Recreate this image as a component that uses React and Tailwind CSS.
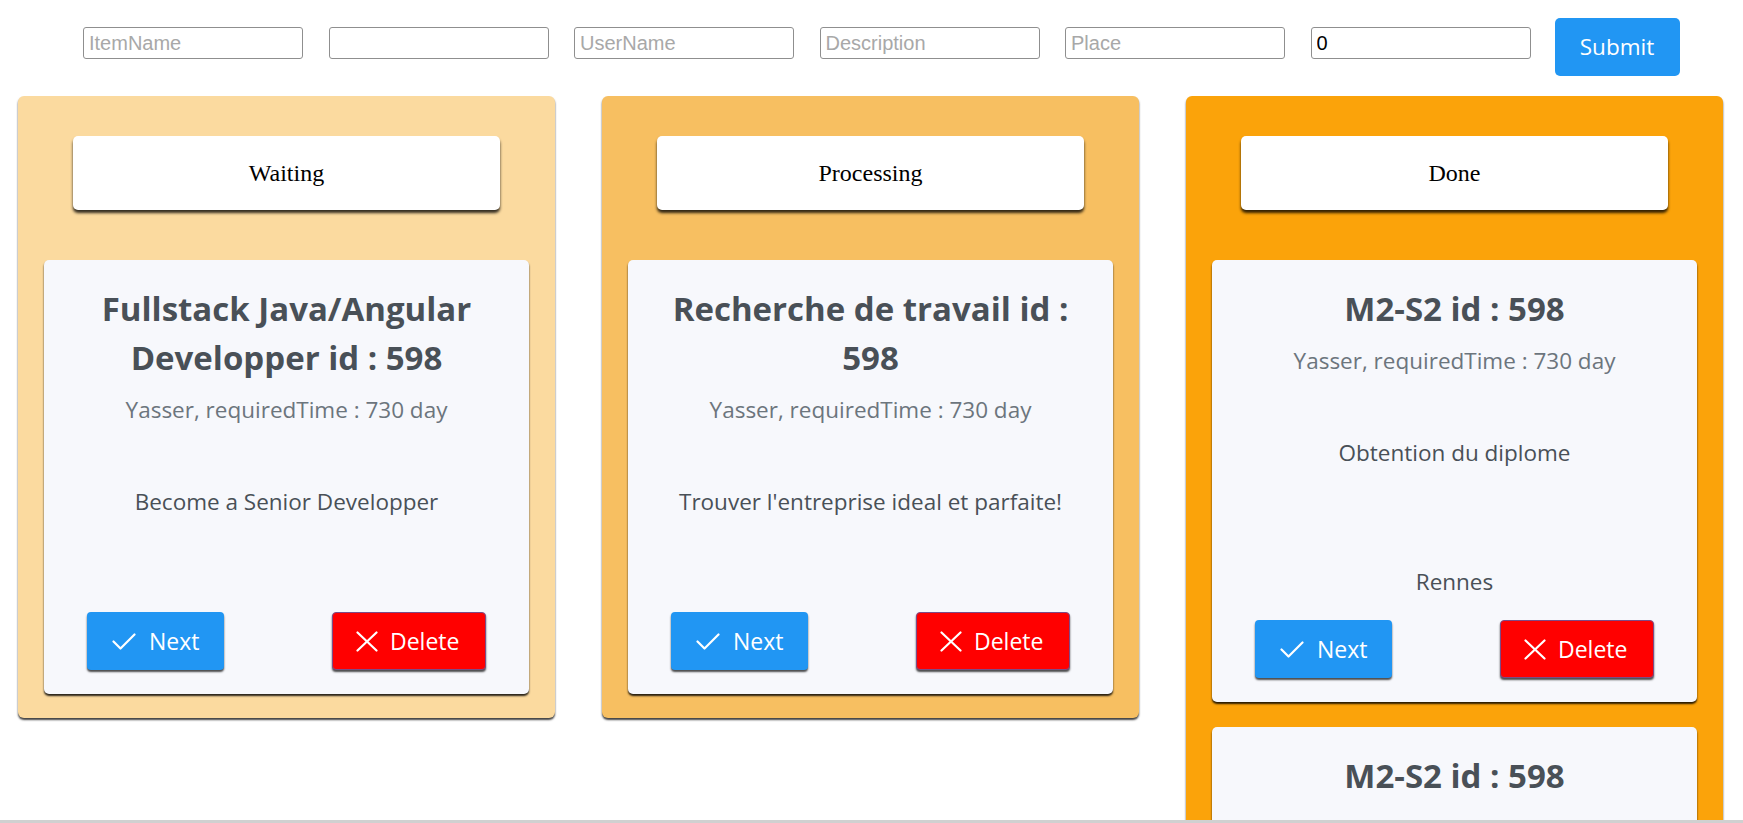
import React, { useState } from 'react';

const columns = [
	{
		name: 'Waiting',
		bg: 'bg-[#fbda9f]',
		items: [
			{ id: 598, title: 'Fullstack Java/Angular Developper', user: 'Yasser', time: 730, description: 'Become a Senior Developper', place: '' }
		]
	},
	{
		name: 'Processing',
		bg: 'bg-[#f7bf61]',
		items: [
			{ id: 598, title: 'Recherche de travail', user: 'Yasser', time: 730, description: "Trouver l'entreprise ideal et parfaite!", place: '' }
		]
	},
	{
		name: 'Done',
		bg: 'bg-[#fba30a]',
		items: [
			{ id: 598, title: 'M2-S2', user: 'Yasser', time: 730, description: 'Obtention du diplome', place: 'Rennes' },
			{ id: 598, title: 'M2-S2', user: 'Yasser', time: 730, description: 'Obtention du diplome', place: 'Rennes' }
		]
	}
];

const CheckIcon = () => (
	<svg width="24" height="17" viewBox="0 0 24 17" fill="none" stroke="currentColor" strokeWidth="2.2" strokeLinecap="round" strokeLinejoin="round">
		<polyline points="1.5,8.5 8.5,15.5 22.5,1.5" />
	</svg>
);

const CloseIcon = () => (
	<svg width="22" height="21" viewBox="0 0 22 21" fill="none" stroke="currentColor" strokeWidth="2.2" strokeLinecap="round">
		<line x1="1.5" y1="1.5" x2="20.5" y2="19.5" />
		<line x1="20.5" y1="1.5" x2="1.5" y2="19.5" />
	</svg>
);

const ItemCard = ({ item }) => (
	<div className="bg-[#f7f8fc] rounded-[5px] shadow-[0_2px_2px_rgba(0,0,0,0.85)] py-6 text-center">
		<h3 className="px-[30px] text-[33px] leading-[49px] font-bold text-[#495057]">
			{`${item.title} id : ${item.id}`}
		</h3>
		<p className="mt-[13px] text-[22.5px] leading-[30px] text-[#6c757d]">
			{`${item.user}, requiredTime : ${item.time} day`}
		</p>
		<p className="mt-[62px] text-[22.5px] leading-[30px] text-[#495057]">{item.description}</p>
		{item.place && (
			<p className="mt-[99px] text-[22.5px] leading-[30px] text-[#495057]">{item.place}</p>
		)}
		<div className={'flex justify-between px-[43px] ' + (item.place ? 'mt-[23px]' : 'mt-[95px]')}>
			<button className="h-[58px] w-[137px] flex items-center gap-[13px] pl-[25px] bg-[#2196f3] text-white text-[23px] rounded-[4px] shadow-[0_2px_2px_rgba(0,0,0,0.7)]">
				<CheckIcon />
				<span>Next</span>
			</button>
			<button className="h-[58px] w-[154px] flex items-center gap-[12px] pl-[23px] bg-[#ff0000] text-white text-[23px] rounded-[4px] border border-[#7d4a86] shadow-[0_2px_2px_rgba(0,0,0,0.7)]">
				<CloseIcon />
				<span>Delete</span>
			</button>
		</div>
	</div>
);

const App = () => {
	const [count, setCount] = useState('0');

	return (
		<div className="h-screen overflow-hidden bg-white font-['Open_Sans',sans-serif]">
			{/* Form */}
			<div className="flex items-start pt-[18px] pl-[83px] font-['Liberation_Sans',Arial,sans-serif]">
				<div className="flex gap-[25.5px] mt-[9px]">
					<input placeholder="ItemName" className="w-[220px] h-[32px] px-[5px] text-[20px] border border-[#8f8f8f] rounded-[3px] placeholder:text-[#a8a8a8] outline-none" />
					<input className="w-[220px] h-[32px] px-[5px] text-[20px] border border-[#8f8f8f] rounded-[3px] outline-none" />
					<input placeholder="UserName" className="w-[220px] h-[32px] px-[5px] text-[20px] border border-[#8f8f8f] rounded-[3px] placeholder:text-[#a8a8a8] outline-none" />
					<input placeholder="Description" className="w-[220px] h-[32px] px-[5px] text-[20px] border border-[#8f8f8f] rounded-[3px] placeholder:text-[#a8a8a8] outline-none" />
					<input placeholder="Place" className="w-[220px] h-[32px] px-[5px] text-[20px] border border-[#8f8f8f] rounded-[3px] placeholder:text-[#a8a8a8] outline-none" />
					<input value={count} onChange={(e) => setCount(e.target.value)} className="w-[220px] h-[32px] px-[5px] text-[20px] text-black border border-[#8f8f8f] rounded-[3px] outline-none" />
				</div>
				<button className="ml-[24px] w-[125px] h-[58px] bg-[#2196f3] text-white text-[22.5px] rounded-[5px] font-['Open_Sans',sans-serif]">
					Submit
				</button>
			</div>

			{/* Columns */}
			<div className="flex items-start gap-[47px] pl-[18px] mt-[20px]">
				{columns.map((col) => (
					<div key={col.name} className={'w-[537px] shrink-0 rounded-[6px] shadow-[0_2px_2px_rgba(0,0,0,0.75)] pt-[40px] pb-[24px] px-[26px] ' + col.bg}>
						<div className="mx-[29px] h-[74px] flex items-center justify-center bg-white rounded-[5px] shadow-[0_3px_3px_rgba(0,0,0,0.8)] font-['Times_New_Roman','Liberation_Serif',serif] text-[24px] text-black">
							{col.name}
						</div>
						<div className="mt-[50px] flex flex-col gap-[25px]">
							{col.items.map((item, i) => (
								<ItemCard key={i} item={item} />
							))}
						</div>
					</div>
				))}
			</div>

			<div className="fixed bottom-0 left-0 right-0 h-[3px] bg-[#d0d0d0]" />
		</div>
	);
};

export default App;
